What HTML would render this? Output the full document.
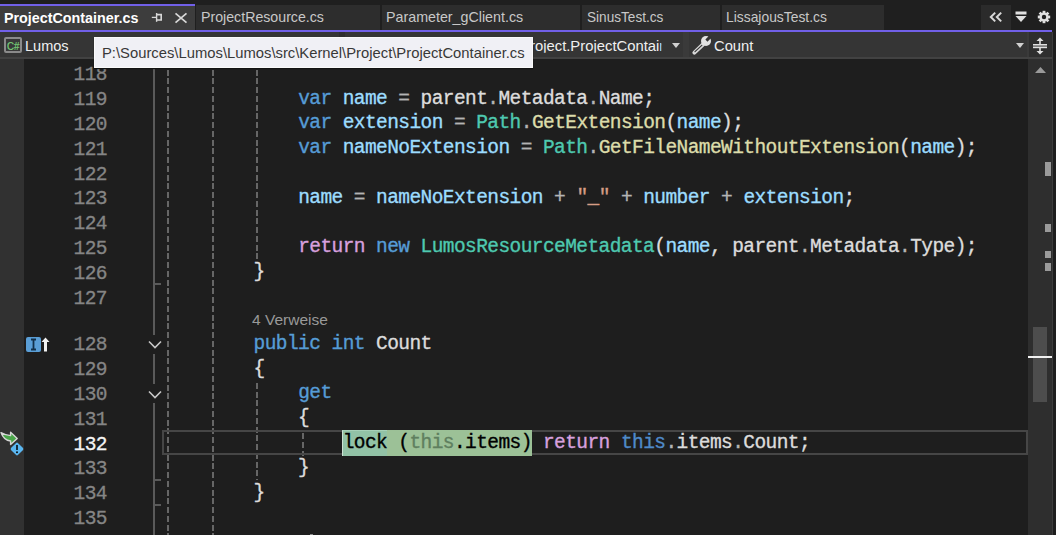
<!DOCTYPE html>
<html><head><meta charset="utf-8">
<style>
*{margin:0;padding:0;box-sizing:border-box}
html,body{width:1056px;height:535px;overflow:hidden;background:#1e1e1e}
body{position:relative;font-family:"Liberation Sans",sans-serif}
.a{position:absolute}
.t{position:absolute;white-space:pre;line-height:1}
/* tabs */
#well{left:0;top:0;width:1056px;height:32px;background:#1f1f1f}
.tab{position:absolute;top:5px;height:25px;background:#2d2d2d}
.tabt{position:absolute;top:9.5px;font-size:15px;letter-spacing:-0.48px;color:#c8c8c8;white-space:pre;line-height:1}
#nav{left:0;top:32px;width:1052px;height:27px;background:#2e2e2e}
.dd{position:absolute;top:32px;height:25px;background:#353535}
.code{position:absolute;left:164.6px;font-family:"Liberation Mono",monospace;font-size:19.5px;letter-spacing:-0.575px;line-height:24.8px;height:24.8px;white-space:pre;color:#dcdcdc;-webkit-text-stroke:0.35px currentColor}
.ln{position:absolute;left:39px;-webkit-text-stroke:0.3px currentColor;width:68px;text-align:right;font-family:"Liberation Mono",monospace;font-size:19.5px;letter-spacing:-0.575px;line-height:24.8px;height:24.8px;white-space:pre;color:#858585}
.k{color:#569cd6}.v{color:#9cdcfe}.ty{color:#4ec9b0}.m{color:#dcdcaa}.s{color:#d69d85}.o{color:#b4b4b4}.c{color:#d8a0df}.hk{color:#000}.ht{color:#5f7f5f}
.g{position:absolute;width:1.6px;background:repeating-linear-gradient(to bottom,#666 0,#666 5.8px,transparent 5.8px,transparent 8.75px)}
</style></head><body>
<!-- tab well -->
<div class="a" id="well"></div>
<div class="a" style="left:0;top:4px;width:195px;height:2px;background:#7160e8"></div>
<div class="a" style="left:0;top:6px;width:195px;height:24px;background:#3d3d3d"></div>
<!-- pin icon -->
<svg class="a" style="left:150px;top:12px" width="14" height="11" viewBox="0 0 14 11"><g fill="none" stroke="#d8d8d8"><path d="M1.8 5.4H6.4" stroke-width="1.3"/><path d="M6.6 1V9.8" stroke-width="1.4"/><path d="M6.6 2.6H11.2V8H6.6" stroke-width="1.6"/></g></svg>
<!-- close icon -->
<svg class="a" style="left:174px;top:11px" width="14" height="14" viewBox="0 0 14 14"><path d="M1.5 2.3L12.5 11.6M12.5 2.3L1.5 11.6" stroke="#d8d8d8" stroke-width="1.7"/></svg>
<div class="tab" style="left:196px;width:184px"></div>
<div class="tab" style="left:382px;width:198px"></div>
<div class="tab" style="left:582px;width:138px"></div>
<div class="tab" style="left:722px;width:162px"></div>
<!-- right tab buttons -->
<div class="a" style="left:981px;top:5px;width:30px;height:25px;background:#2b2b2b"></div>
<svg class="a" style="left:988px;top:10px" width="16" height="14" viewBox="0 0 16 14"><path d="M7.2 2.6L2.8 7L7.2 11.4M13.2 2.6L8.8 7L13.2 11.4" fill="none" stroke="#d8d8d8" stroke-width="2"/></svg>
<svg class="a" style="left:1014px;top:10px" width="14" height="14" viewBox="0 0 14 14"><rect x="1.5" y="1.5" width="11" height="3" fill="#e0e0e0"/><path d="M1.5 6H12.5L7 12Z" fill="#e0e0e0"/></svg>
<svg class="a" style="left:1037px;top:10px" width="14" height="14" viewBox="0 0 14 14"><g fill="#e0e0e0"><circle cx="7" cy="7" r="4.6"/><rect x="5.6" y="0.8" width="2.8" height="12.4"/><rect x="0.8" y="5.6" width="12.4" height="2.8"/><rect x="5.6" y="0.8" width="2.8" height="12.4" transform="rotate(45 7 7)"/><rect x="5.6" y="0.8" width="2.8" height="12.4" transform="rotate(-45 7 7)"/></g><circle cx="7" cy="7" r="2.2" fill="#1f1f1f"/></svg>
<div class="a" style="left:0;top:30px;width:1052px;height:2px;background:#7160e8"></div>

<!-- nav bar -->
<div class="a" id="nav"></div>
<div class="a" style="left:0;top:57px;width:1052px;height:2px;background:#424242"></div>
<div class="dd" style="left:0;width:339px"></div>
<div class="dd" style="left:345px;width:338px"></div>
<div class="dd" style="left:689px;width:338px"></div>
<div class="a" style="left:683px;top:32px;width:6px;height:25px;background:#3a3a3a"></div>
<div class="a" style="left:1027px;top:32px;width:2px;height:25px;background:#3a3a3a"></div>
<div class="a" style="left:1029px;top:32px;width:23px;height:25px;background:#2e2e2e"></div>
<!-- C# icon -->
<div class="a" style="left:4px;top:37px;width:18px;height:16px;border:2px solid #8a8a8a;border-radius:2px;background:#383838"></div>
<div class="t" style="left:6.6px;top:40.5px;font-size:10.5px;color:#78d078;-webkit-text-stroke:0.2px #78d078;transform:scaleX(0.92);transform-origin:0 0">C#</div>
<svg class="a" style="left:672px;top:43px" width="8" height="5" viewBox="0 0 8 5"><path d="M0 0H8L4 5Z" fill="#d0d0d0"/></svg>
<!-- wrench -->
<svg class="a" style="left:688px;top:32px" width="28" height="26" viewBox="0 0 28 26"><g stroke-linecap="round"><path d="M15.2 12.2L6.4 20.6" stroke="#d8d8d8" stroke-width="4"/><path d="M13.8 13.4L7 19.6" stroke="#353535" stroke-width="1.2"/></g><circle cx="18" cy="9" r="5" fill="#e2e2e2"/><rect x="16.5" y="2.8" width="3" height="5.6" fill="#333333" transform="rotate(45 18 9)"/></svg>
<svg class="a" style="left:1016px;top:43px" width="8" height="5" viewBox="0 0 8 5"><path d="M0 0H8L4 5Z" fill="#d0d0d0"/></svg>
<!-- split icon -->
<svg class="a" style="left:1032px;top:37px" width="16" height="18" viewBox="0 0 16 18"><g fill="#e0e0e0"><rect x="1" y="7" width="14" height="1.6"/><rect x="1" y="9.6" width="14" height="1.6"/><rect x="1" y="8.6" width="14" height="1" fill="#8a8a8a"/><path d="M8 0.5L4.5 4H11.5Z"/><path d="M8 17.5L4.5 14H11.5Z"/><rect x="7.2" y="3" width="1.6" height="4"/><rect x="7.2" y="11" width="1.6" height="4"/></g></svg>

<!-- editor -->
<div class="a" style="left:0;top:59px;width:24px;height:476px;background:#313131"></div>
<!-- scrollbar -->
<div class="a" style="left:1028px;top:59px;width:24px;height:476px;background:#2e2e2e"></div>
<div class="a" style="left:1052px;top:32px;width:1px;height:503px;background:#3c3c3c"></div>
<svg class="a" style="left:1035px;top:67px" width="11" height="6" viewBox="0 0 11 6"><path d="M0 6H11L5.5 0Z" fill="#9a9a9a"/></svg>
<div class="a" style="left:1045px;top:162px;width:6px;height:14px;background:#9a9a9a"></div>
<div class="a" style="left:1045px;top:224px;width:6px;height:8px;background:#9a9a9a"></div>
<div class="a" style="left:1045px;top:251px;width:6px;height:7px;background:#9a9a9a"></div>
<div class="a" style="left:1045px;top:263px;width:6px;height:8px;background:#9a9a9a"></div>
<div class="a" style="left:1033px;top:327px;width:14px;height:75px;background:#4d4d4d"></div>
<div class="a" style="left:1028px;top:356px;width:24px;height:2px;background:#f0f0f0"></div>

<!-- outline margin -->
<div class="a" style="left:153px;top:59px;width:2px;height:276px;background:#5a5a5a"></div>
<div class="a" style="left:153.5px;top:283px;width:7px;height:1.5px;background:#5a5a5a"></div>
<div class="a" style="left:153px;top:354px;width:2px;height:30px;background:#5a5a5a"></div>
<div class="a" style="left:153px;top:403px;width:2px;height:132px;background:#5a5a5a"></div>
<div class="a" style="left:153.5px;top:479px;width:7px;height:1.5px;background:#5a5a5a"></div>
<div class="a" style="left:153.5px;top:504px;width:7px;height:1.5px;background:#5a5a5a"></div>
<svg class="a" style="left:148px;top:340px" width="14" height="9" viewBox="0 0 14 9"><path d="M1 1.5L7 7.5L13 1.5" fill="none" stroke="#c8c8c8" stroke-width="1.6"/></svg>
<svg class="a" style="left:148px;top:390px" width="14" height="9" viewBox="0 0 14 9"><path d="M1 1.5L7 7.5L13 1.5" fill="none" stroke="#c8c8c8" stroke-width="1.6"/></svg>

<!-- indent guides -->
<div class="g" style="left:167.4px;top:61.25px;height:474px"></div>
<div class="g" style="left:212.4px;top:61.25px;height:474px"></div>
<div class="g" style="left:256.4px;top:61.25px;height:198px"></div>
<div class="g" style="left:256.3px;top:383px;height:97px"></div>
<div class="g" style="left:302px;top:433px;height:23px"></div>

<!-- current line rectangle -->
<div class="a" style="left:162px;top:430px;width:866px;height:25px;border:2px solid #464646"></div>
<!-- highlights -->
<div class="a" style="left:342px;top:430px;width:45px;height:25.5px;background:#92c2a6;border-left:1.5px solid #cde2d4;border-top:1px solid #a6d0b8"></div>
<div class="a" style="left:387px;top:430px;width:145px;height:25.5px;background:#9cc197"></div>

<!-- line numbers -->
<div class="ln" style="top:63.30px">118</div>
<div class="ln" style="top:88.10px">119</div>
<div class="ln" style="top:112.90px">120</div>
<div class="ln" style="top:137.70px">121</div>
<div class="ln" style="top:162.50px">122</div>
<div class="ln" style="top:187.30px">123</div>
<div class="ln" style="top:212.10px">124</div>
<div class="ln" style="top:236.90px">125</div>
<div class="ln" style="top:261.70px">126</div>
<div class="ln" style="top:286.50px">127</div>
<div class="ln" style="top:333.30px">128</div>
<div class="ln" style="top:358.10px">129</div>
<div class="ln" style="top:382.90px">130</div>
<div class="ln" style="top:407.70px">131</div>
<div class="ln" style="top:432.50px;color:#f4f4f4">132</div>
<div class="ln" style="top:457.30px">133</div>
<div class="ln" style="top:482.10px">134</div>
<div class="ln" style="top:506.90px">135</div>

<!-- code -->
<div class="code" style="top:86.60px">            <span class="k">var</span> <span class="v">name</span> <span class="o">=</span> parent<span class="o">.</span>Metadata<span class="o">.</span>Name;</div>
<div class="code" style="top:111.40px">            <span class="k">var</span> <span class="v">extension</span> <span class="o">=</span> <span class="ty">Path</span><span class="o">.</span><span class="m">GetExtension</span>(<span class="v">name</span>);</div>
<div class="code" style="top:136.20px">            <span class="k">var</span> <span class="v">nameNoExtension</span> <span class="o">=</span> <span class="ty">Path</span><span class="o">.</span><span class="m">GetFileNameWithoutExtension</span>(<span class="v">name</span>);</div>
<div class="code" style="top:185.80px">            <span class="v">name</span> <span class="o">=</span> <span class="v">nameNoExtension</span> <span class="o">+</span> <span class="s">"_"</span> <span class="o">+</span> <span class="v">number</span> <span class="o">+</span> <span class="v">extension</span>;</div>
<div class="code" style="top:235.40px">            <span class="c">return</span> <span class="k">new</span> <span class="ty">LumosResourceMetadata</span>(<span class="v">name</span>, parent<span class="o">.</span>Metadata<span class="o">.</span>Type);</div>
<div class="code" style="top:260.20px">        }</div>
<div class="code" style="top:331.80px">        <span class="k">public</span> <span class="k">int</span> Count</div>
<div class="code" style="top:356.60px">        {</div>
<div class="code" style="top:381.40px">            <span class="k">get</span></div>
<div class="code" style="top:406.20px">            {</div>
<div class="code" style="top:431.00px">                <span class="hk">lock</span> <span class="hk">(</span><span class="ht">this</span><span class="hk">.items)</span> <span class="c">return</span> <span style="color:#4f8ac9">this</span><span class="o">.</span>items<span class="o">.</span>Count;</div>
<div class="code" style="top:455.80px">            }</div>
<div class="code" style="top:480.60px">        }</div>


<div class="a" style="left:309.5px;top:533.5px;width:3px;height:1.5px;background:#8a8a8a"></div>
<!-- glyph margin icons -->
<div class="a" style="left:26px;top:337px;width:15px;height:15px;background:#5a9ed6;border-radius:2px"></div>
<svg class="a" style="left:26px;top:337px" width="15" height="15" viewBox="0 0 15 15"><path d="M5 2.5H10M5 12.5H10M7.5 2.5V12.5" stroke="#12304a" stroke-width="1.8"/></svg>
<svg class="a" style="left:41px;top:337px" width="9" height="15" viewBox="0 0 9 15"><path d="M4.5 0.5L8.5 5H6V14.5H3V5H0.5Z" fill="#f2f2f2"/></svg>
<svg class="a" style="left:0;top:431px" width="19" height="15" viewBox="0 0 19 15"><path d="M1 1.6C4 3.4 7.5 4.4 10.6 4.6L10.6 1.3L17.2 7.4L10.6 13.4L10.6 10C6.5 9.8 3 7.2 1 1.6Z" fill="#4aa54a" stroke="#d6d6d6" stroke-width="1.4" stroke-linejoin="round"/></svg>
<svg class="a" style="left:10px;top:442px" width="14" height="14" viewBox="0 0 14 14"><path d="M7 2.3L11.7 7L7 11.7L2.3 7Z" fill="#5ab6f0" stroke="#5ab6f0" stroke-width="3.2" stroke-linejoin="round"/><path d="M7 3V8" stroke="#000" stroke-width="1.5"/><circle cx="7" cy="10.3" r="0.95" fill="#000"/></svg>

<!-- tooltip -->
<div class="a" style="left:94px;top:37px;width:439px;height:31px;background:#f0f0f5;border:1px solid #fafafa;box-shadow:0 1px 1px #121212;z-index:5"></div>
<div class="t" style="left:4.14px;top:9.80px;font-size:15.00px;font-weight:bold;color:#ffffff;transform:scaleX(0.9538);transform-origin:0 0">ProjectContainer.cs</div>
<div class="t" style="left:200.87px;top:8.80px;font-size:15.00px;font-weight:normal;color:#c8c8c8;transform:scaleX(0.9455);transform-origin:0 0">ProjectResource.cs</div>
<div class="t" style="left:386.26px;top:8.80px;font-size:15.00px;font-weight:normal;color:#c8c8c8;transform:scaleX(0.9511);transform-origin:0 0">Parameter_gClient.cs</div>
<div class="t" style="left:587.06px;top:8.80px;font-size:15.00px;font-weight:normal;color:#c8c8c8;transform:scaleX(0.9068);transform-origin:0 0">SinusTest.cs</div>
<div class="t" style="left:726.49px;top:8.80px;font-size:15.00px;font-weight:normal;color:#c8c8c8;transform:scaleX(0.9241);transform-origin:0 0">LissajousTest.cs</div>
<div class="t" style="left:24.84px;top:37.80px;font-size:15.00px;font-weight:normal;color:#f0f0f0;transform:scaleX(0.9684);transform-origin:0 0">Lumos</div>
<div class="t" style="left:529.61px;top:37.80px;clip-path:inset(0 3px 0 0);font-size:15.00px;font-weight:normal;color:#f0f0f0;transform:scaleX(0.9882);transform-origin:0 0">roject.ProjectContair</div>
<div class="t" style="left:713.66px;top:37.80px;font-size:15.00px;font-weight:normal;color:#f0f0f0;transform:scaleX(0.9820);transform-origin:0 0">Count</div>
<div class="t" style="left:101.82px;top:44.80px;z-index:6;font-size:15.00px;font-weight:normal;color:#383838;transform:scaleX(0.9863);transform-origin:0 0">P:\Sources\Lumos\Lumos\src\Kernel\Project\ProjectContainer.cs</div>
<div class="t" style="left:252.49px;top:311.80px;font-size:15.00px;font-weight:normal;color:#999999;transform:scaleX(1.0340);transform-origin:0 0">4 Verweise</div>

</body></html>
